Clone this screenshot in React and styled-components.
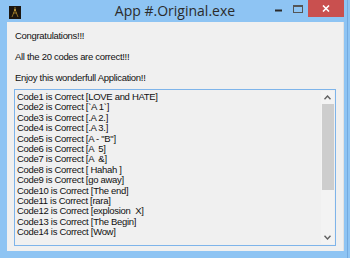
import styled, { createGlobalStyle } from "styled-components";

const Global = createGlobalStyle`
  html, body { margin: 0; padding: 0; }
  body { width: 350px; height: 258px; overflow: hidden; }
`;

const Frame = styled.div`
  width: 350px;
  height: 258px;
  box-sizing: border-box;
  background: #8ec4f3;
  box-shadow: inset -2px 0 #8ec4f3, inset -3px 0 #74abe0;
  display: flex;
  flex-direction: column;
`;

const TitleBar = styled.div`
  height: 22px;
  flex: none;
  display: grid;
  grid-template-columns: 1fr auto 1fr;
  align-items: start;
`;

const AppIcon = styled.div`
  margin: 5px 0 0 9px;
  width: 12px;
  height: 13px;
  justify-self: start;
`;

const Title = styled.div`
  font-family: "Open Sans", "Noto Sans", sans-serif;
  font-size: 14px;
  line-height: 22px;
  color: #2b2b2b;
  white-space: nowrap;
`;

const Controls = styled.div`
  justify-self: end;
  display: flex;
  align-items: flex-start;
  margin-right: 6px;
`;

const CtrlButton = styled.div`
  width: ${(p) => p.$w}px;
  height: 17px;
  display: flex;
  align-items: center;
  justify-content: center;
  margin-top: ${(p) => p.$top}px;
  background: ${(p) => (p.$close ? "#c9504f" : "transparent")};
`;

const Client = styled.div`
  flex: 1;
  margin: 0 6px 7px 7px;
  background: #f0f0f0;
  border-right: 1px solid #e2e2e2;
  padding: 0 7px 5px 7px;
  display: flex;
  flex-direction: column;
  font-family: "Liberation Sans", Arial, sans-serif;
  font-size: 9.5px;
  letter-spacing: -0.3px;
  color: #111;
`;

const Message = styled.div`
  line-height: 12px;
  margin-top: ${(p) => p.$top}px;
  padding-left: 1px;
`;

const ListBox = styled.div`
  margin-top: 5px;
  flex: 1;
  border: 1px solid #7eb4ea;
  background: #f0f0f0;
  display: flex;
  min-height: 0;
`;

const Items = styled.div`
  flex: 1;
  padding: 2px 0 0 2px;
  overflow: hidden;
`;

const Item = styled.div`
  line-height: 10.4px;
  height: 10.4px;
  white-space: pre;
`;

const ScrollBar = styled.div`
  width: 13px;
  margin: 1px 1px 1px 0;
  background: #f3f3f3;
  display: flex;
  flex-direction: column;
  align-items: center;
`;

const Arrow = styled.div`
  height: 13px;
  width: 13px;
  display: flex;
  align-items: center;
  justify-content: center;
`;

const Thumb = styled.div`
  width: 12px;
  height: 86px;
  background: #cdcdcd;
`;

const Spacer = styled.div`
  flex: 1;
`;

const codes = [
  "LOVE and HATE",
  "`A 1`",
  ".A 2.",
  ".A 3.",
  'A - "B"',
  "A  5",
  "A  &",
  " Hahah ",
  "go away",
  "The end",
  "rara",
  "explosion  X",
  "The Begin",
  "Wow",
];

const Chevron = ({ up }) => (
  <svg width="7" height="5" viewBox="0 0 7 5">
    <path
      d={up ? "M0.5 4.2 L3.5 1 L6.5 4.2" : "M0.5 0.8 L3.5 4 L6.5 0.8"}
      fill="none"
      stroke="#606060"
      strokeWidth="1.4"
    />
  </svg>
);

export default function App() {
  return (
    <>
      <Global />
      <Frame>
        <TitleBar>
          <AppIcon>
            <svg width="12" height="13" viewBox="0 0 12 13">
              <rect width="12" height="13" fill="#1c1610" />
              <path d="M3 11 L5 6 L6 3 L7 6 L9 11" fill="none" stroke="#8a6a22" strokeWidth="1" />
              <path d="M4 7 L8 7 M6 3 L6 1" fill="none" stroke="#b08a30" strokeWidth="0.8" />
              <circle cx="6" cy="4" r="1" fill="#c9a040" />
            </svg>
          </AppIcon>
          <Title>App #.Original.exe</Title>
          <Controls>
            <CtrlButton $w={20} $top={2}>
              <svg width="7" height="3" viewBox="0 0 7 3">
                <rect y="0.5" width="7" height="2" fill="#2a2a2a" />
              </svg>
            </CtrlButton>
            <CtrlButton $w={20} $top={0}>
              <svg width="10" height="8" viewBox="0 0 10 8">
                <rect x="0.5" y="0.5" width="9" height="7" fill="none" stroke="#555" strokeWidth="1" />
                <rect x="0.5" y="0.5" width="9" height="1.5" fill="#555" />
              </svg>
            </CtrlButton>
            <CtrlButton $w={36} $top={0} $close>
              <svg width="8" height="7" viewBox="0 0 8 7">
                <path d="M1 0.5 L7 6.5 M7 0.5 L1 6.5" stroke="#fff" strokeWidth="1.6" />
              </svg>
            </CtrlButton>
          </Controls>
        </TitleBar>
        <Client>
          <Message $top={8}>Congratulations!!!</Message>
          <Message $top={9}>All the 20 codes are correct!!!</Message>
          <Message $top={9}>Enjoy this wonderfull Application!!</Message>
          <ListBox>
            <Items>
              {codes.map((c, i) => (
                <Item key={i}>{`Code${i + 1} is Correct [${c}]`}</Item>
              ))}
            </Items>
            <ScrollBar>
              <Arrow>
                <Chevron up />
              </Arrow>
              <Thumb />
              <Spacer />
              <Arrow>
                <Chevron />
              </Arrow>
            </ScrollBar>
          </ListBox>
        </Client>
      </Frame>
    </>
  );
}
